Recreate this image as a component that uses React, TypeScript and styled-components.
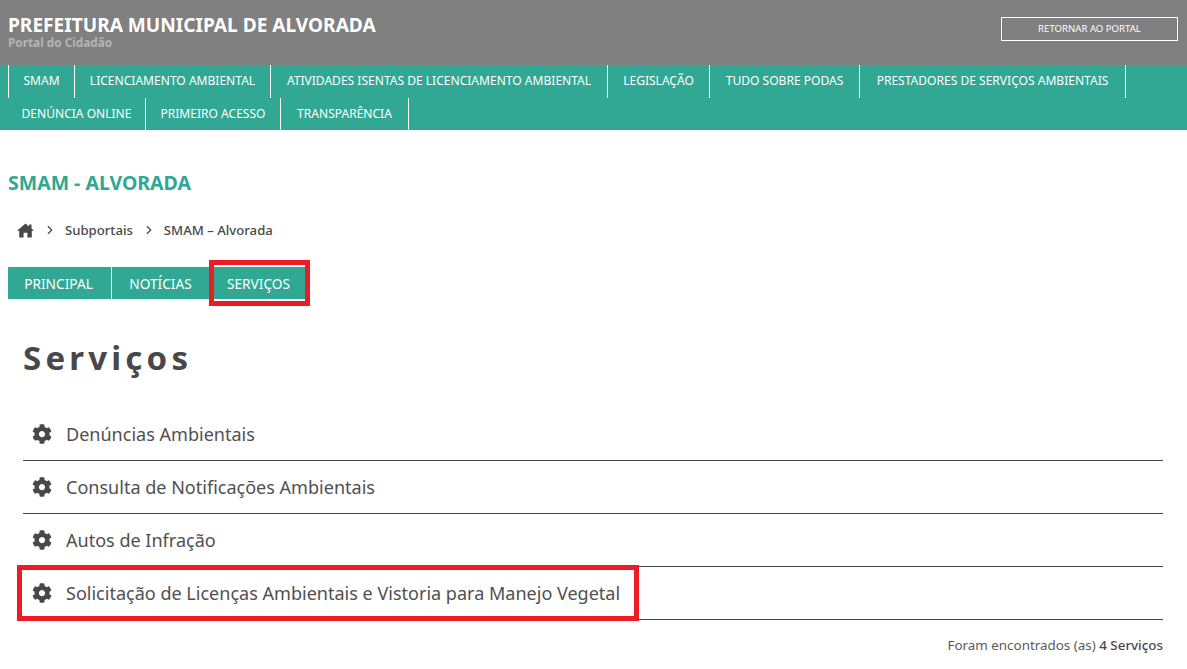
import React from 'react';
import styled, { createGlobalStyle } from 'styled-components';
import { FaCog } from 'react-icons/fa';
import { ChevronRight } from 'lucide-react';

const GlobalStyle = createGlobalStyle`
  html, body {
    margin: 0;
    padding: 0;
    background: #fff;
    font-family: 'Noto Sans', 'Open Sans', sans-serif;
    color: #48484a;
  }
`;

const Header = styled.header`
  height: 65px;
  background: #808080;
  padding: 0 9px 0 8px;
  display: flex;
  justify-content: space-between;
  box-sizing: border-box;
`;

const Brand = styled.div`
  padding-top: 14px;
`;

const BrandTitle = styled.div`
  color: #fff;
  font-size: 19.1px;
  line-height: 22px;
  font-weight: 700;
`;

const BrandSub = styled.div`
  color: #b4b4b4;
  font-size: 11.8px;
  line-height: 12px;
  font-weight: 700;
`;

const ReturnLink = styled.a`
  margin-top: 17px;
  width: 177px;
  height: 24px;
  box-sizing: border-box;
  border: 1px solid #fff;
  color: #fff;
  font-size: 9.6px;
  padding-bottom: 1px;
  display: flex;
  align-items: center;
  justify-content: center;
`;

const Nav = styled.nav`
  background: #30a894;
  height: 65px;
  padding-left: 8px;
`;

const NavRow = styled.div<{ $height: number }>`
  display: flex;
  height: ${({ $height }) => $height}px;
`;

const NavItem = styled.a<{ $width: number; $first?: boolean }>`
  width: ${({ $width }) => $width}px;
  box-sizing: border-box;
  color: #fff;
  font-size: 12.05px;
  display: flex;
  align-items: center;
  justify-content: center;
  padding-bottom: 2px;
  border-right: 1px solid #fff;
  border-left: ${({ $first }) => ($first ? '1px solid #fff' : 'none')};
  white-space: nowrap;
`;

const Main = styled.main`
  padding: 0 9px 0 8px;
`;

const PageTitle = styled.h1`
  margin: 0;
  padding-top: 42px;
  color: #30a894;
  font-size: 19.5px;
  line-height: 22px;
  font-weight: 700;
`;

const Breadcrumb = styled.div`
  display: flex;
  align-items: center;
  margin-top: 25px;
  height: 22px;
  padding-left: 9px;
  font-size: 13.15px;
  font-weight: 500;
  color: #48484a;
`;

const Crumb = styled.span`
  white-space: nowrap;
`;

const HomeIcon = styled.svg`
  width: 17px;
  height: 15px;
  flex: none;
  fill: #48484a;
`;

const CrumbSep = styled(ChevronRight)`
  width: 14px;
  height: 14px;
  margin: 0 8px 0 9px;
  flex: none;
`;

const Tabs = styled.div`
  display: flex;
  margin-top: 26px;
`;

const Tab = styled.a<{ $width: number; $last?: boolean }>`
  position: relative;
  width: ${({ $width }) => $width}px;
  height: 32px;
  box-sizing: border-box;
  background: #30a894;
  color: #fff;
  font-size: 13.7px;
  display: flex;
  align-items: center;
  justify-content: center;
  padding-right: ${({ $last }) => ($last ? '0' : '2px')};
  border-right: ${({ $last }) => ($last ? 'none' : '1px solid #fff')};
`;

const TabMark = styled.span`
  position: absolute;
  left: -3px;
  top: -7px;
  width: 101px;
  height: 46px;
  box-sizing: border-box;
  border: 5px solid #ed1c24;
`;

const Section = styled.section`
  padding: 0 15px;
`;

const SectionTitle = styled.h2`
  margin: 0;
  padding-top: 38px;
  font-size: 33px;
  line-height: 42px;
  font-weight: 700;
  letter-spacing: 4.2px;
  color: #48484a;
`;

const ServiceList = styled.ul`
  list-style: none;
  margin: 29px 0 0;
  padding: 0;
`;

const ServiceRow = styled.li`
  position: relative;
  display: flex;
  align-items: center;
  height: 53px;
  box-sizing: border-box;
  border-bottom: 1px solid #48484a;
  padding-left: 9px;
  font-size: 18.05px;
  color: #505052;
`;

const ServiceIcon = styled(FaCog)`
  font-size: 20px;
  color: #48484a;
  margin-right: 14px;
  flex: none;
`;

const RowMark = styled.span`
  position: absolute;
  left: -6px;
  top: -2px;
  width: 622px;
  height: 56px;
  box-sizing: border-box;
  border: 5px solid #ed1c24;
`;

const Footer = styled.div`
  text-align: right;
  margin-top: 16px;
  font-size: 13.4px;
  line-height: 18px;
  color: #5a5a5c;
`;

const FooterCount = styled.strong`
  font-weight: 500;
  color: #48484a;
`;

const services = [
  'Denúncias Ambientais',
  'Consulta de Notificações Ambientais',
  'Autos de Infração',
  'Solicitação de Licenças Ambientais e Vistoria para Manejo Vegetal',
];

const App: React.FC = () => {
  return (
    <>
      <GlobalStyle />
      <Header>
        <Brand>
          <BrandTitle>PREFEITURA MUNICIPAL DE ALVORADA</BrandTitle>
          <BrandSub>Portal do Cidadão</BrandSub>
        </Brand>
        <ReturnLink>RETORNAR AO PORTAL</ReturnLink>
      </Header>
      <Nav>
        <NavRow $height={33}>
          <NavItem $first $width={67}>SMAM</NavItem>
          <NavItem $width={196}>LICENCIAMENTO AMBIENTAL</NavItem>
          <NavItem $width={337}>ATIVIDADES ISENTAS DE LICENCIAMENTO AMBIENTAL</NavItem>
          <NavItem $width={102}>LEGISLAÇÃO</NavItem>
          <NavItem $width={150}>TUDO SOBRE PODAS</NavItem>
          <NavItem $width={266}>PRESTADORES DE SERVIÇOS AMBIENTAIS</NavItem>
        </NavRow>
        <NavRow $height={32}>
          <NavItem $width={138}>DENÚNCIA ONLINE</NavItem>
          <NavItem $width={135}>PRIMEIRO ACESSO</NavItem>
          <NavItem $width={128}>TRANSPARÊNCIA</NavItem>
        </NavRow>
      </Nav>
      <Main>
        <PageTitle>SMAM - ALVORADA</PageTitle>
        <Breadcrumb>
          <HomeIcon viewBox="0 0 17 15">
            <path d="M8.5 0.5 L12 3.5 V1.5 H14.5 V5.6 L17 7.8 H14.8 V14.5 H10.4 V9.8 H6.6 V14.5 H2.2 V7.8 H0 Z" />
          </HomeIcon>
          <CrumbSep />
          <Crumb>Subportais</Crumb>
          <CrumbSep />
          <Crumb>SMAM – Alvorada</Crumb>
        </Breadcrumb>
        <Tabs>
          <Tab $width={104}>PRINCIPAL</Tab>
          <Tab $width={100}>NOTÍCIAS</Tab>
          <Tab $width={93} $last>
            SERVIÇOS
            <TabMark />
          </Tab>
        </Tabs>
        <Section>
          <SectionTitle>Serviços</SectionTitle>
          <ServiceList>
            {services.map((name, i) => (
              <ServiceRow key={name}>
                <ServiceIcon />
                {name}
                {i === services.length - 1 && <RowMark />}
              </ServiceRow>
            ))}
          </ServiceList>
          <Footer>
            Foram encontrados (as) <FooterCount>4 Serviços</FooterCount>
          </Footer>
        </Section>
      </Main>
    </>
  );
};

export default App;
